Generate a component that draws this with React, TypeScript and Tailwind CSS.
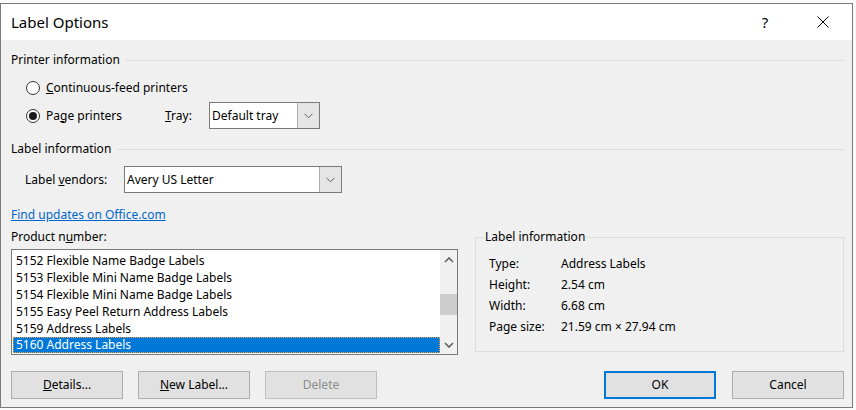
import React from 'react'

const font = { fontFamily: '"Segoe UI", "Noto Sans", sans-serif' }

const Chevron = () => (
  <svg width="9" height="6" viewBox="0 0 9 6">
    <path d="M0.5 0.8 L4.5 4.8 L8.5 0.8" fill="none" stroke="#606060" strokeWidth="1" />
  </svg>
)

const Combo = ({ value, width }: { value: string; width: string }) => (
  <div className={`flex h-[27px] border border-[#7a7a7a] bg-white ${width}`}>
    <div className="flex flex-1 items-center pl-[2px] text-[12px] text-black">{value}</div>
    <div className="flex w-[22px] items-center justify-center border-l border-[#acacac] bg-[#e5e5e5]">
      <Chevron />
    </div>
  </div>
)

const Radio = ({ checked }: { checked?: boolean }) => (
  <div className="flex h-[14px] w-[14px] items-center justify-center rounded-full border border-[#333333] bg-white">
    {checked && <div className="h-[8px] w-[8px] rounded-full bg-[#1a1a1a]" />}
  </div>
)

const Button = ({
  children,
  variant,
}: {
  children: React.ReactNode
  variant?: 'default' | 'disabled'
}) => {
  const cls =
    variant === 'default'
      ? 'border-2 border-[#0078d7] text-black'
      : variant === 'disabled'
        ? 'border border-[#bfbfbf] text-[#8c8c8c]'
        : 'border border-[#adadad] text-black'
  return (
    <div
      className={`flex h-[28px] w-[112px] items-center justify-center bg-[#e1e1e1] text-[12px] ${cls}`}
    >
      {children}
    </div>
  )
}

const products = [
  '5152 Flexible Name Badge Labels',
  '5153 Flexible Mini Name Badge Labels',
  '5154 Flexible Mini Name Badge Labels',
  '5155 Easy Peel Return Address Labels',
  '5159 Address Labels',
  '5160 Address Labels',
]

const info = [
  ['Type:', 'Address Labels'],
  ['Height:', '2.54 cm'],
  ['Width:', '6.68 cm'],
  ['Page size:', '21.59 cm × 27.94 cm'],
]

export default function App() {
  return (
    <div className="h-[410px] w-[856px] overflow-hidden bg-[#fbfbfb] pt-[3px]" style={font}>
      <div className="flex h-[405px] w-[853px] flex-col border border-[#7a7a7a] bg-[#f0f0f0]">
        {/* TITLE BAR */}
        <div className="flex h-[36px] items-center justify-between bg-white">
          <span className="pl-[10px] text-[15px] text-black">Label Options</span>
          <div className="flex h-full">
            <div className="flex w-[58px] items-center justify-center text-[15px] text-black">?</div>
            <div className="flex w-[58px] items-center justify-center">
              <svg width="12" height="12" viewBox="0 0 12 12">
                <path d="M0.5 0.5 L11.5 11.5 M11.5 0.5 L0.5 11.5" stroke="#000" strokeWidth="1" />
              </svg>
            </div>
          </div>
        </div>

        {/* BODY */}
        <div className="flex flex-col pl-[10px] pr-[8px] pt-[12px] text-[12px] leading-[16px] text-black">
          {/* Printer information */}
          <div className="flex items-center gap-[6px]">
            <span>Printer information</span>
            <div className="h-px flex-1 bg-[#dcdcdc]" />
          </div>

          <div className="mt-[10px] flex h-[20px] items-center gap-[6px] pl-[15px]">
            <Radio />
            <span>
              <u>C</u>ontinuous-feed printers
            </span>
          </div>

          <div className="mt-[4px] flex items-center pl-[15px]">
            <Radio checked />
            <span className="ml-[6px] w-[119px]">
              Pa<u>g</u>e printers
            </span>
            <span className="w-[44px]">
              <u>T</u>ray:
            </span>
            <Combo value="Default tray" width="w-[111px]" />
          </div>

          {/* Label information */}
          <div className="mt-[12px] flex items-center gap-[6px]">
            <span>Label information</span>
            <div className="h-px flex-1 bg-[#dcdcdc]" />
          </div>

          <div className="mt-[9px] flex items-center pl-[14px]">
            <span className="w-[99px]">
              Label <u>v</u>endors:
            </span>
            <Combo value="Avery US Letter" width="w-[218px]" />
          </div>

          <span className="mt-[14px] text-[#0066cc] underline">Find updates on Office.com</span>

          <div className="mt-[6px] flex items-start">
            {/* Product list */}
            <div className="flex w-[447px] flex-col">
              <span>
                Product n<u>u</u>mber:
              </span>
              <div className="mt-[4px] flex h-[106px] border border-[#7a7a7a] bg-white">
                <div className="flex flex-1 flex-col pl-[1px] pt-[2px]">
                  {products.map((p, i) =>
                    i === products.length - 1 ? (
                      <div
                        key={p}
                        className="flex h-[16px] items-center border border-dotted border-[#f0a040] bg-[#0078d7] pl-[2px] text-white"
                      >
                        {p}
                      </div>
                    ) : (
                      <div key={p} className="flex h-[17px] items-center pl-[3px]">
                        {p}
                      </div>
                    ),
                  )}
                </div>
                <div className="flex w-[17px] flex-col items-center bg-[#f0f0f0]">
                  <div className="flex h-[17px] items-center justify-center pt-[2px]">
                    <svg width="10" height="6" viewBox="0 0 10 6">
                      <path d="M1 5 L5 1 L9 5" fill="none" stroke="#606060" strokeWidth="1.6" />
                    </svg>
                  </div>
                  <div className="mt-[27px] h-[21px] w-full bg-[#cdcdcd]" />
                  <div className="flex-1" />
                  <div className="flex h-[17px] items-center justify-center pb-[2px]">
                    <svg width="10" height="6" viewBox="0 0 10 6">
                      <path d="M1 1 L5 5 L9 1" fill="none" stroke="#606060" strokeWidth="1.6" />
                    </svg>
                  </div>
                </div>
              </div>
            </div>

            {/* Label information box */}
            <fieldset className="ml-[17px] h-[123px] flex-1 border border-[#dcdcdc]">
              <legend className="ml-[8px] px-px">Label information</legend>
              <div className="flex flex-col pl-[13px] pt-[8px]">
                {info.map(([k, v]) => (
                  <div key={k} className="flex h-[21px] items-center">
                    <span className="w-[72px]">{k}</span>
                    <span>{v}</span>
                  </div>
                ))}
              </div>
            </fieldset>
          </div>

          {/* Buttons */}
          <div className="mt-[16px] flex items-center">
            <Button>
              <u>D</u>etails...
            </Button>
            <div className="ml-[15px]">
              <Button>
                <u>N</u>ew Label...
              </Button>
            </div>
            <div className="ml-[15px]">
              <Button variant="disabled">Delete</Button>
            </div>
            <div className="flex-1" />
            <Button variant="default">OK</Button>
            <div className="ml-[16px]">
              <Button>Cancel</Button>
            </div>
          </div>
        </div>
      </div>
    </div>
  )
}
